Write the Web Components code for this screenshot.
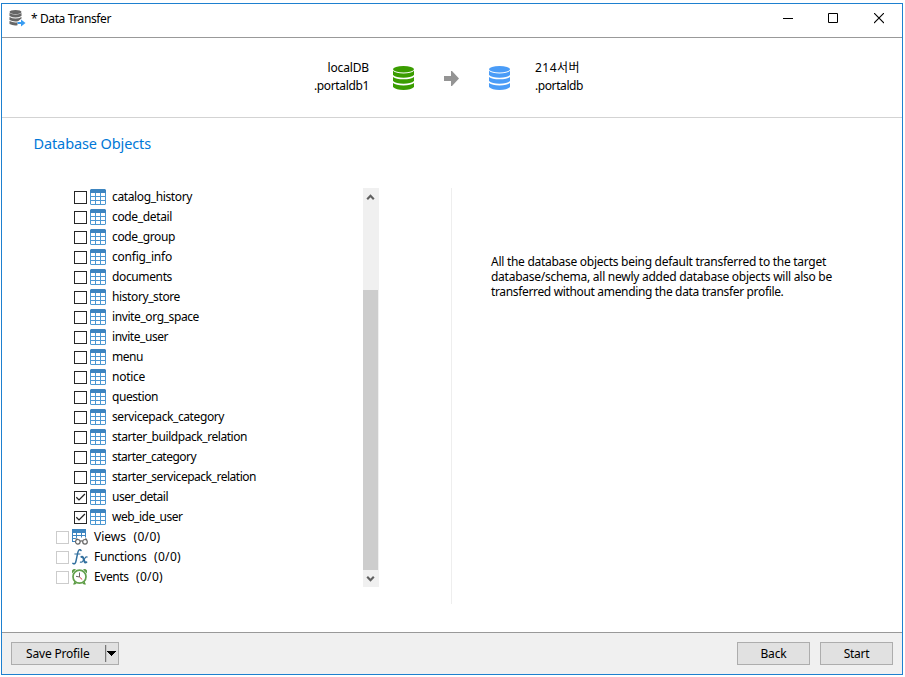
<!DOCTYPE html>
<html lang="en">
<head>
<meta charset="utf-8">
<title>Data Transfer</title>
<style>
html,body{margin:0;width:905px;height:677px;overflow:hidden;background:#fff}
body{font:12px/18px "Noto Sans","Noto Sans CJK KR",sans-serif;color:#000}
</style>
</head>
<body>
<transfer-window></transfer-window>
<script>
function define(name, html, setup) {
  const template = document.createElement('template');
  template.innerHTML = html;
  customElements.define(name, class extends HTMLElement {
    connectedCallback() {
      if (this.shadowRoot) return;
      this.attachShadow({mode: 'open'}).appendChild(template.content.cloneNode(true));
      if (setup) setup.call(this, this.shadowRoot);
    }
  });
}

/* A single line of text whose tracking is adjusted to an advance width. */
define('fit-text', `<style>:host{display:inline-block;white-space:pre}span{display:inline-block}</style><span><slot></slot></span>`, function (root) {
  const span = root.querySelector('span');
  const target = +this.getAttribute('width');
  const natural = span.getBoundingClientRect().width;
  span.style.letterSpacing = ((target - natural) / this.textContent.length) + 'px';
  this.style.width = target + 'px';
});

const icons = {
  table: `<svg width="16" height="16" viewBox="0 0 16 16"><path fill="#4a97d2" d="M0 3h16v12l-1 1H1l-1-1z"/><path fill="#3d85c0" d="M1 0h14l1 1v3H0V1z"/><path fill="#fff" d="M1 4h4v3H1zM6 4h4v3H6zM11 4h4v3h-4zM1 8h4v3H1zM6 8h4v3H6zM11 8h4v3h-4zM1 12h4v3H1zM6 12h4v3H6zM11 12h4v3h-4z"/></svg>`,
  views: `<svg width="16" height="16" viewBox="0 0 16 16"><path fill="#3d85c0" d="M0 0h14v9H4v4H0z"/><path fill="#fff" d="M1 4h3v2H1zM5 4h4v2H5zM10 4h3v2h-3zM1 7h3v2H1zM5 7h4v2H5zM10 7h3v2h-3zM1 10h3v2H1z"/><path fill="#fff" d="M3 10.5l2-2h10l1 1V16H3z"/><g fill="#fff" stroke="#666" stroke-width="1.200"><circle cx="5.800" cy="12.800" r="2.300"/><circle cx="13" cy="12.800" r="2.300"/><path d="M8 12.200q1.300-.8 2.800 0M4 10.800l1.300-1.500M14.800 10.800l-1.300-1.500" fill="none"/></g></svg>`,
  functions: `<svg width="16" height="16" viewBox="0 0 16 16" fill="none" stroke="#316f9e" stroke-linecap="round"><path stroke-width="1.500" d="M9 1.400C7.500-.2 6.300 1 5.600 4.300L4.100 11.600C3.600 14.300 2.600 15.500.9 14.400"/><path stroke-width="1" d="M2.800 5H8"/><path stroke-width="2" d="M9.400 7.900q1.300-.7 1.900 1l1.200 3.800q.5 1.300 1.900.5"/><path stroke-width="1.200" d="M15.200 8q-1.200-.5-2.100 1l-2.300 3.200q-.9 1.400-2.400.9"/></svg>`,
  events: `<svg width="16" height="16" viewBox="0 0 16 16"><path fill="#5b9a43" d="M0 1.500Q1.500-.5 4 .3L0 4.500zM15 1.500Q13.500-.5 11 .3l4 4.200zM1 15.500l1.500-3 2 2-1.500 1zM14 15.500l-1.500-3-2 2 1.500 1z"/><circle cx="7.500" cy="7.700" r="6.500" fill="#fff" stroke="#62a04b" stroke-width="1.700"/><path d="M7.500 3.500V8M4 7.300L7.500 8" stroke="#666" fill="none"/><path d="M7.500 8l2.700 2.500" stroke="#d33c3c"/></svg>`
};

define('check-box', `<style>:host{display:block;box-sizing:border-box;width:13px;height:13px;border:1px solid #262626;background:#fff}
:host([off]){border-color:#ccc}svg{display:none}:host([checked]) svg{display:block}</style>
<svg width="11" height="11" viewBox="0 0 11 11"><path d="M1.300 5.200L4 7.900 9.900 2" fill="none" stroke="#222" stroke-width="1.250"/></svg>`);

define('tree-item', `<style>:host{display:flex;height:20px;box-sizing:border-box;padding:2px 0 0 18px}
:host([group]){padding-left:0}check-box{margin:2px 3px 0 0}.icon{width:16px;height:16px}.icon svg{display:block}
.label{margin:-1px 0 0 6px;display:flex}.count{margin-left:7.500px}</style>
<check-box></check-box><div class="icon"></div><div class="label"></div>`, function (root) {
  const box = root.querySelector('check-box');
  if (this.hasAttribute('checked')) box.setAttribute('checked', '');
  if (this.hasAttribute('group')) box.setAttribute('off', '');
  root.querySelector('.icon').innerHTML = icons[this.getAttribute('icon') || 'table'];
  root.querySelector('.label').innerHTML =
    `<fit-text width="${this.getAttribute('width')}">${this.getAttribute('label')}</fit-text>` +
    (this.hasAttribute('group') ? '<fit-text class="count" width="27">(0/0)</fit-text>' : '');
});

define('object-tree', `<style>:host{display:block;width:307px;padding-left:55px;box-sizing:border-box}</style><div></div>`, function (root) {
  const tables = [['catalog_history',80],['code_detail',60],['code_group',63],['config_info',60],['documents',60],['history_store',68],['invite_org_space',87],['invite_user',56],['menu',31],['notice',33],['question',46],['servicepack_category',112],['starter_buildpack_relation',135],['starter_category',84],['starter_servicepack_relation',144],['user_detail',56,1],['web_ide_user',70.5,1]];
  root.querySelector('div').innerHTML = tables.map(([label, width, on]) =>
    `<tree-item label="${label}" width="${width}" ${on ? 'checked' : ''}></tree-item>`).join('') +
    `<tree-item group icon="views" label="Views" width="32"></tree-item><tree-item group icon="functions" label="Functions" width="52.500"></tree-item><tree-item group icon="events" label="Events" width="34.500"></tree-item>`;
});

define('scroll-bar', `<style>:host{display:flex;flex-direction:column;width:16px;height:399px;background:#f0f0f0;margin:1px 0 0 55px}
svg{display:block;width:15px;flex:none}.track{flex:1;padding-top:85px}.thumb{width:15px;height:280px;background:#cdcdcd}</style>
<svg height="17" viewBox="0 0 15 17"><path d="M4.200 11.300L7.500 7.700l3.300 3.600" fill="none" stroke="#606060" stroke-width="2.100"/></svg>
<div class="track"><div class="thumb"></div></div>
<svg height="17" viewBox="0 0 15 17"><path d="M4.200 6.700l3.300 3.600 3.300-3.600" fill="none" stroke="#606060" stroke-width="2.100"/></svg>`);

define('db-icon', `<style>:host{display:block;width:22px;height:25px}svg{display:block}</style>
<svg width="22" height="25" viewBox="0 0 22 25"><g fill="currentColor"><ellipse cx="10.500" cy="3.200" rx="10.500" ry="3.200"/><path d="M0 4.800Q3 7.400 10.500 7.400T21 4.800V9Q18 11.800 10.500 11.800T0 9z"/><path d="M0 10.900Q3 13.300 10.500 13.300T21 10.900V15Q18 17.800 10.500 17.800T0 15z"/><path d="M0 17Q3 19.400 10.500 19.400T21 17V21Q18 24 10.500 24T0 21z"/></g></svg>`);

define('push-button', `<style>:host{display:flex;box-sizing:border-box;height:23px;width:73px;border:1px solid #adadad;background:#e1e1e1;align-items:center;justify-content:center;line-height:18px}
:host([menu]){width:108px;justify-content:flex-start;padding-left:14px}.drop{display:none;margin-left:auto}:host([menu]) .drop{display:block}svg{display:block}</style>
<slot></slot><svg class="drop" width="14" height="21" viewBox="0 0 14 21"><path d="M1 2h1v17H1z" fill="#777"/><path d="M2 2h1v17H2z" fill="#c8c8c8"/><path d="M3 8h9v1h-1v1h-1v1H9v1H8v1H7v-1H6v-1H5v-1H4V9H3z"/></svg>`);

define('title-bar', `<style>:host{display:flex;height:33px;border-bottom:1px solid #999;align-items:flex-start}
.app{margin:5px 0 0 7px}fit-text{margin:6px 0 0 5px}.controls{display:flex;margin:9px 18px 0 auto}.box{margin:0 36px 0 35px}svg{display:block}</style>
<svg class="app" width="17" height="18" viewBox="0 0 17 18"><g fill="#666"><ellipse cx="6.500" cy="3" rx="6" ry="2"/><path d="M.5 4q6 3 12 0v3q-6 3-12 0zM.5 8q6 3 12 0v1.500L9 12.200Q4 13 .5 11z"/><path d="M.5 12q4 2 8 1.300v3Q4 17 .5 15z"/></g><path d="M8.500 14h5" stroke="#389cf2" stroke-width="2"/><path d="M12 10.500l4.500 3.500-4.500 3.500z" fill="#389cf2"/></svg>
<fit-text width="80">* Data Transfer</fit-text>
<div class="controls"><svg width="10" height="11"><path d="M0 5h10v1H0z"/></svg><svg class="box" width="10" height="11"><path d="M.5.5h9v9h-9z" fill="none" stroke="#000"/></svg><svg width="10" height="11"><path d="M0 0l10 10M10 0L0 10" stroke="#000" stroke-width="1.100"/></svg></div>`);

define('transfer-route', `<style>:host{display:flex;height:79px;border-bottom:1px solid #d3d3d3;align-items:flex-start;box-sizing:content-box}
.source{width:367px;margin-top:21px;display:flex;flex-direction:column;align-items:flex-end}.target{margin:21px 0 0 24px;display:flex;flex-direction:column;align-items:flex-start}
.source-icon{color:#3a9d00;margin:28px 0 0 24px}.target-icon{color:#4a9cf7;margin:28px 0 0 29px}.arrow{display:block;margin:33px 0 0 28px}fit-text{height:18px;line-height:18px}</style>
<div class="source"><fit-text width="41.500">localDB</fit-text><fit-text width="55">.portaldb1</fit-text></div>
<db-icon class="source-icon"></db-icon>
<svg class="arrow" width="17" height="16"><path d="M1 5h7V0h1l7 7.500L9 15H8v-5H1z" fill="#949494"/></svg>
<db-icon class="target-icon"></db-icon>
<div class="target"><fit-text width="45">214서버</fit-text><fit-text width="48">.portaldb</fit-text></div>`);

define('object-panel', `<style>:host{display:flex;flex:1;flex-direction:column;min-height:0}
.heading{font-size:14.500px;line-height:22px;color:#0078d7;margin:14px 0 0 31.500px;height:55px}.content{display:flex}
.rule{width:1px;height:416px;background:#eee;margin:1px 0 0 72px}.note{margin:67px 0 0 39px;line-height:15px;display:flex;flex-direction:column}.note fit-text{height:15px}object-tree{margin-left:-1px;flex:none}</style>
<div class="heading"><fit-text width="117.500">Database Objects</fit-text></div>
<div class="content"><object-tree></object-tree><scroll-bar></scroll-bar><div class="rule"></div>
<div class="note"><fit-text width="335">All the database objects being default transferred to the target</fit-text><fit-text width="341">database/schema, all newly added database objects will also be</fit-text><fit-text width="292.500">transferred without amending the data transfer profile.</fit-text></div></div>`);

define('action-bar', `<style>:host{display:flex;box-sizing:border-box;height:42px;border-top:1px solid #999;background:#f0f0f0;padding:9px 9px 0 9px;gap:10px}.space{flex:1}</style>
<push-button menu><fit-text width="63.500">Save Profile</fit-text></push-button><span class="space"></span><push-button><fit-text width="26">Back</fit-text></push-button><push-button><fit-text width="25.500">Start</fit-text></push-button>`);

define('transfer-window', `<style>:host{display:flex;flex-direction:column;box-sizing:border-box;width:902px;height:672px;margin:3px 0 0 1px;border:1px solid #1e80cf;background:#fff}</style>
<title-bar></title-bar><transfer-route></transfer-route><object-panel></object-panel><action-bar></action-bar>`);
</script>
</body>
</html>
